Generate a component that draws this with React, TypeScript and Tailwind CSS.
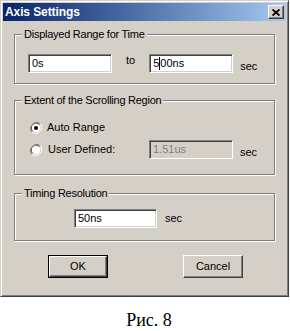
import React from "react";

const face = "bg-[#D4D0C8]";

const Field = ({
  value,
  className,
  disabled,
  caret,
}: {
  value: string;
  className: string;
  disabled?: boolean;
  caret?: boolean;
}) => (
  <div
    className={`${className} h-[19px] border border-t-[#808080] border-l-[#808080] border-b-white border-r-white shadow-[inset_1px_1px_0_#404040,inset_-1px_-1px_0_#D4D0C8] ${
      disabled ? face + " text-[#808080]" : "bg-white text-black"
    } flex items-center pl-[3px] text-[11px] leading-none`}
  >
    {caret ? (
      <span className="flex items-center">
        5<span className="inline-block w-px h-[13px] bg-black" />
        00ns
      </span>
    ) : (
      value
    )}
  </div>
);

const Radio = ({ checked }: { checked?: boolean }) => (
  <svg width="12" height="12" viewBox="0 0 12 12" className="shrink-0">
    <path d="M10.2 1.8 A6 6 0 0 0 1.8 10.2" fill="none" stroke="#808080" strokeWidth="1" />
    <path d="M9.5 2.5 A5 5 0 0 0 2.5 9.5" fill="none" stroke="#404040" strokeWidth="1" />
    <path d="M1.8 10.2 A6 6 0 0 0 10.2 1.8" fill="none" stroke="#ffffff" strokeWidth="1" />
    <path d="M2.5 9.5 A5 5 0 0 0 9.5 2.5" fill="none" stroke="#D4D0C8" strokeWidth="1" />
    <circle cx="6" cy="6" r="4.2" fill="#ffffff" />
    {checked && <circle cx="6" cy="6" r="2" fill="#000000" />}
  </svg>
);

const Group = ({
  title,
  className,
  inner,
  children,
}: {
  title: string;
  className: string;
  inner: string;
  children: React.ReactNode;
}) => (
  <fieldset
    className={`border border-[#808080] shadow-[inset_1px_1px_0_#fff,1px_1px_0_#fff] ${className}`}
  >
    <legend className={`ml-[7px] px-[2px] ${face} text-[11px] leading-[14px] tracking-[-0.25px]`}>
      {title}
    </legend>
    <div className={inner}>{children}</div>
  </fieldset>
);

const Button = ({ label, isDefault }: { label: string; isDefault?: boolean }) => (
  <div className={`w-[60px] h-[23px] ${isDefault ? "border border-black" : ""} flex`}>
    <div className="flex-1 flex items-center justify-center border border-t-white border-l-white border-b-[#404040] border-r-[#404040] shadow-[inset_-1px_-1px_0_#808080] text-[11px]">
      {label}
    </div>
  </div>
);

export default function App() {
  return (
    <div
      className="w-[290px] h-[331px] bg-white text-black overflow-hidden"
      style={{ fontFamily: '"Liberation Sans", Arial, sans-serif' }}
    >
      {/* window */}
      <div className={`w-[289px] h-[297px] ${face} border border-t-[#D4D0C8] border-l-[#D4D0C8] border-b-[#404040] border-r-[#404040] shadow-[inset_1px_1px_0_#fff,inset_-1px_-1px_0_#808080] p-[2px]`}>
        {/* title bar */}
        <div className="h-[18px] flex items-center justify-between pl-[2px] pr-[2px] bg-gradient-to-r from-[#0A246A] to-[#A6CAF0]">
          <span className="text-white font-bold text-[12px] tracking-[-0.1px]">Axis Settings</span>
          <div className={`w-[16px] h-[14px] ${face} border border-t-white border-l-white border-b-[#404040] border-r-[#404040] shadow-[inset_-1px_-1px_0_#808080] flex items-center justify-center`}>
            <svg width="8" height="7" viewBox="0 0 8 7">
              <path d="M0.5 0.5 L7.5 6.5 M7.5 0.5 L0.5 6.5" stroke="#000" strokeWidth="1.8" />
            </svg>
          </div>
        </div>

        <div className="px-[11px]">
          <Group title="Displayed Range for Time" className="mt-[6px]" inner="pl-[13px] pt-[13px] pb-[10px]">
            <div className="flex items-center text-[11px] leading-[13px]">
              <Field value="0s" className="w-[84px]" />
              <span className="ml-[14px] self-start">to</span>
              <Field value="500ns" className="w-[84px] ml-[14px]" caret />
              <span className="ml-[7px] self-end">sec</span>
            </div>
          </Group>

          <Group title="Extent of the Scrolling Region" className="mt-[9px]" inner="pl-[15px] pt-[14px] pb-[15px]">
            <div className="flex items-center h-[13px] text-[11px]">
              <Radio checked />
              <span className="ml-[5px]">Auto Range</span>
            </div>
            <div className="flex items-center mt-[6px] text-[11px] leading-[13px]">
              <Radio />
              <span className="ml-[6px] w-[101px]">User Defined:</span>
              <Field value="1.51us" className="w-[84px]" disabled />
              <span className="ml-[7px] self-end">sec</span>
            </div>
          </Group>

          <Group title="Timing Resolution" className="mt-[11px]" inner="pl-[59px] pt-[9px] pb-[12px]">
            <div className="flex items-center text-[11px]">
              <Field value="50ns" className="w-[83px]" />
              <span className="ml-[8px]">sec</span>
            </div>
          </Group>

          <div className="flex mt-[14px] pl-[34px] gap-[75px]">
            <Button label="OK" isDefault />
            <Button label="Cancel" />
          </div>
        </div>
      </div>

      <div
        className="text-center text-[18px] leading-none pt-[14px] pl-[8px]"
        style={{ fontFamily: '"Liberation Serif", "Times New Roman", serif' }}
      >
        Рис. 8
      </div>
    </div>
  );
}
